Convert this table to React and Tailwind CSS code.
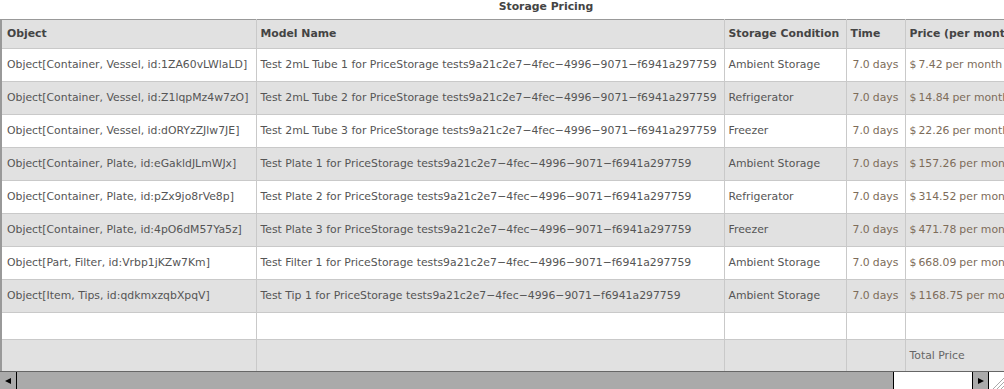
const rows = [
  ["Object[Container, Vessel, id:1ZA60vLWlaLD]", "Test 2mL Tube 1 for PriceStorage tests9a21c2e7\u22124fec\u22124996\u22129071\u2212f6941a297759", "Ambient Storage", "7.42"],
  ["Object[Container, Vessel, id:Z1lqpMz4w7zO]", "Test 2mL Tube 2 for PriceStorage tests9a21c2e7\u22124fec\u22124996\u22129071\u2212f6941a297759", "Refrigerator", "14.84"],
  ["Object[Container, Vessel, id:dORYzZJlw7JE]", "Test 2mL Tube 3 for PriceStorage tests9a21c2e7\u22124fec\u22124996\u22129071\u2212f6941a297759", "Freezer", "22.26"],
  ["Object[Container, Plate, id:eGakldJLmWJx]", "Test Plate 1 for PriceStorage tests9a21c2e7\u22124fec\u22124996\u22129071\u2212f6941a297759", "Ambient Storage", "157.26"],
  ["Object[Container, Plate, id:pZx9jo8rVe8p]", "Test Plate 2 for PriceStorage tests9a21c2e7\u22124fec\u22124996\u22129071\u2212f6941a297759", "Refrigerator", "314.52"],
  ["Object[Container, Plate, id:4pO6dM57Ya5z]", "Test Plate 3 for PriceStorage tests9a21c2e7\u22124fec\u22124996\u22129071\u2212f6941a297759", "Freezer", "471.78"],
  ["Object[Part, Filter, id:Vrbp1jKZw7Km]", "Test Filter 1 for PriceStorage tests9a21c2e7\u22124fec\u22124996\u22129071\u2212f6941a297759", "Ambient Storage", "668.09"],
  ["Object[Item, Tips, id:qdkmxzqbXpqV]", "Test Tip 1 for PriceStorage tests9a21c2e7\u22124fec\u22124996\u22129071\u2212f6941a297759", "Ambient Storage", "1168.75"],
];

const cell = "border border-[#c9c9c9] px-[4px] whitespace-nowrap overflow-hidden";
const first = " border-l-2 border-l-[#999] pl-[5px]";
const head = " border-t-[#999]";

export default function App() {
  return (
    <div className="w-[1004px] h-[389px] bg-white overflow-hidden text-[10.85px] text-[#555] font-['DejaVu_Sans',sans-serif] flex flex-col">
      <div className="flex-1 overflow-hidden">
        <div className="w-[1092px]">
          <div className="h-[19px] text-center font-bold text-[#444] leading-[13px]">Storage Pricing</div>
          <table className="table-fixed border-collapse w-[1092px]">
            <colgroup>
              <col className="w-[255px]" />
              <col className="w-[468px]" />
              <col className="w-[122px]" />
              <col className="w-[59px]" />
              <col className="w-[188px]" />
            </colgroup>
            <thead>
              <tr className="h-[29px] bg-[#e1e1e1] font-bold text-[#444] text-left">
                <th className={cell + first + head}>Object</th>
                <th className={cell + head}>Model Name</th>
                <th className={cell + head}>Storage Condition</th>
                <th className={cell + head}>Time</th>
                <th className={cell + head}>Price (per month)</th>
              </tr>
            </thead>
            <tbody>
              {rows.map((r, i) => (
                <tr key={i} className={"h-[33px] " + (i % 2 ? "bg-[#e1e1e1]" : "bg-white")}>
                  <td className={cell + first}>{r[0]}</td>
                  <td className={cell}>{r[1]}</td>
                  <td className={cell}>{r[2]}</td>
                  <td className={cell + " text-[#7d6c5a] pl-[6px]"}>7.0<span className="ml-[3px]">days</span></td>
                  <td className={cell + " text-[#7d6c5a]"}>
                    <span>$</span><span className="ml-[2px]">{r[3]}</span><span className="ml-[3px]">per month</span>
                  </td>
                </tr>
              ))}
              <tr className="h-[27px] bg-white">
                <td className={cell + first}></td>
                <td className={cell}></td>
                <td className={cell}></td>
                <td className={cell}></td>
                <td className={cell}></td>
              </tr>
              <tr className="h-[33px] bg-[#e1e1e1]">
                <td className={cell + first}></td>
                <td className={cell}></td>
                <td className={cell}></td>
                <td className={cell}></td>
                <td className={cell + " text-[#666]"}>Total Price</td>
              </tr>
            </tbody>
          </table>
        </div>
      </div>
      <div className="h-[18px] flex border-t border-[#666] bg-[#aaa] shrink-0">
        <div className="w-[17px] border-r border-black flex items-center justify-center">
          <svg width="6" height="6" viewBox="0 0 6 6"><path d="M0 3 L6 0 L6 6 Z" fill="#000" /></svg>
        </div>
        <div className="flex-1 bg-[#aaa]"></div>
        <div className="w-[80px] bg-white border-x border-black"></div>
        <div className="w-[16px] border-r border-black flex items-center justify-center">
          <svg width="6" height="6" viewBox="0 0 6 6"><path d="M6 3 L0 0 L0 6 Z" fill="#000" /></svg>
        </div>
        <div className="w-[15px] bg-white">
          <svg width="15" height="17" viewBox="0 0 15 17">
            <path d="M4 17 L15 6 M8 17 L15 10 M12 17 L15 14" stroke="#aaa" strokeWidth="1" />
          </svg>
        </div>
      </div>
    </div>
  );
}
